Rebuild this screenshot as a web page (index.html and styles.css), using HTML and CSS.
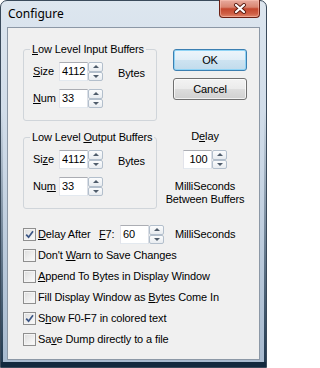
FILE: index.html
```html
<!DOCTYPE html>
<html>
<head>
<meta charset="utf-8">
<title>Configure</title>
<link rel="stylesheet" href="styles.css">
</head>
<body>
<div class="window">
  <div class="titlebar">
    <span class="title">Configure</span>
    <div class="close">
      <svg width="14" height="11" viewBox="0 0 14 11">
        <path d="M3 2 L11 9 M11 2 L3 9" stroke="#5a1c12" stroke-width="4" stroke-linecap="round"/>
        <path d="M3 2 L11 9 M11 2 L3 9" stroke="#ffffff" stroke-width="2.2" stroke-linecap="round"/>
      </svg>
    </div>
  </div>
  <div class="client">
    <div class="top">
      <div class="groups">
        <fieldset class="group">
          <legend><u>L</u>ow Level Input Buffers</legend>
          <div class="row">
            <span class="lbl"><u>S</u>ize</span>
            <span class="field"><span class="input">4112</span><span class="spin"><span class="sb up"></span><span class="sb down"></span></span></span>
            <span class="unit">Bytes</span>
          </div>
          <div class="row">
            <span class="lbl"><u>N</u>um</span>
            <span class="field"><span class="input">33</span><span class="spin"><span class="sb up"></span><span class="sb down"></span></span></span>
          </div>
        </fieldset>
        <fieldset class="group g2">
          <legend>Low Level <u>O</u>utput Buffers</legend>
          <div class="row">
            <span class="lbl">Si<u>z</u>e</span>
            <span class="field"><span class="input">4112</span><span class="spin"><span class="sb up"></span><span class="sb down"></span></span></span>
            <span class="unit">Bytes</span>
          </div>
          <div class="row">
            <span class="lbl">Nu<u>m</u></span>
            <span class="field"><span class="input">33</span><span class="spin"><span class="sb up"></span><span class="sb down"></span></span></span>
          </div>
        </fieldset>
      </div>
      <div class="side">
        <div class="btn default">OK</div>
        <div class="btn cancel">Cancel</div>
        <div class="delay">
          <div class="delay-label">D<u>e</u>lay</div>
          <span class="field"><span class="input">100</span><span class="spin"><span class="sb up"></span><span class="sb down"></span></span></span>
          <div class="ms">MilliSeconds<br>Between Buffers</div>
        </div>
      </div>
    </div>
    <div class="checks">
      <div class="crow">
        <span class="cb checked"><svg width="11" height="11" viewBox="0 0 11 11"><path d="M2.2 5.6 L4.6 8.2 L9 2.2" fill="none" stroke="#3b5585" stroke-width="1.7"/></svg></span>
        <span class="da"><u>D</u>elay After</span>
        <span class="f7"><u>F</u>7:</span>
        <span class="field"><span class="input">60</span><span class="spin"><span class="sb up"></span><span class="sb down"></span></span></span>
        <span class="ms2">MilliSeconds</span>
      </div>
      <div class="crow"><span class="cb"></span><span>Don't <u>W</u>arn to Save Changes</span></div>
      <div class="crow"><span class="cb"></span><span><u>A</u>ppend To Bytes in Display Window</span></div>
      <div class="crow"><span class="cb"></span><span>Fill Display Window as <u>B</u>ytes Come In</span></div>
      <div class="crow">
        <span class="cb checked"><svg width="11" height="11" viewBox="0 0 11 11"><path d="M2.2 5.6 L4.6 8.2 L9 2.2" fill="none" stroke="#3b5585" stroke-width="1.7"/></svg></span>
        <span>S<u>h</u>ow F0-F7 in colored text</span>
      </div>
      <div class="crow"><span class="cb"></span><span>Sa<u>v</u>e Dump directly to a file</span></div>
    </div>
  </div>
</div>
</body>
</html>
```

FILE: styles.css
```css
html, body {
  margin: 0;
  padding: 0;
  background: #ffffff;
}

body {
  font-family: "Liberation Sans", Arial, sans-serif;
  font-size: 11px;
  line-height: 13px;
  letter-spacing: -0.12px;
  color: #000;
}

.window {
  width: 267px;
  height: 368px;
  box-sizing: border-box;
  border: 1px solid #3a4a5b;
  border-radius: 7px 7px 0 0;
  padding: 0 6px 7px;
  display: flex;
  flex-direction: column;
  background:
    linear-gradient(#12293e, #12293e) left bottom / 100% 5px no-repeat,
    linear-gradient(180deg, rgba(18, 42, 64, 0) 30%, rgba(18, 42, 64, 0.9)) left top / 2px 100% no-repeat,
    linear-gradient(180deg, rgba(18, 42, 64, 0) 30%, rgba(18, 42, 64, 0.9)) right top / 2px 100% no-repeat,
    linear-gradient(180deg, #dde6ef 0%, #cbd8e6 45%, #a6b9ce 100%);
}

.titlebar {
  height: 26px;
  display: flex;
  align-items: center;
  padding-left: 1px;
}

.title {
  font-family: "Noto Sans", "Open Sans", sans-serif;
  font-size: 12px;
  line-height: 16px;
  letter-spacing: 0;
  color: #000;
}

.close {
  margin-left: auto;
  align-self: flex-start;
  margin-top: -1px;
  width: 41px;
  height: 18px;
  box-sizing: border-box;
  border: 1px solid #6b2014;
  border-top: none;
  border-radius: 0 0 4px 4px;
  background: linear-gradient(180deg, #e8ab9e 0%, #d98571 42%, #c4472e 52%, #cf5f45 80%, #e0876c 100%);
  box-shadow: inset 0 0 0 1px rgba(255, 200, 185, 0.5);
  display: flex;
  align-items: center;
  justify-content: center;
}

.close svg {
  display: block;
}

.client {
  flex: 1;
  border: 1px solid #8c98a6;
  background: #f0f0f0;
  padding: 15px 0 0 15px;
}

.top {
  display: flex;
}

.groups {
  width: 134px;
  display: flex;
  flex-direction: column;
}

.group {
  margin: 0;
  padding: 6px 0 12px 9px;
  border: 1px solid #d0d5da;
  border-radius: 3px;
  min-width: 0;
  box-sizing: border-box;
  width: 134px;
}

.group legend {
  padding: 0 2px;
  margin-left: -3px;
  line-height: 13px;
  white-space: nowrap;
}

.g2 {
  margin-top: 10px;
}

.row {
  display: flex;
  align-items: center;
  height: 19px;
}

.row + .row {
  margin-top: 8px;
}

.lbl {
  width: 26px;
}

.field {
  display: flex;
  height: 19px;
}

.input {
  width: 29px;
  height: 19px;
  box-sizing: border-box;
  border: 1px solid;
  border-color: #abadb3 #dbdfe6 #e3e9ef #e2e3ea;
  background: #fff;
  padding-left: 2px;
  line-height: 17px;
}

.spin {
  width: 15px;
  height: 19px;
  display: flex;
  flex-direction: column;
}

.sb {
  flex: 1;
  box-sizing: border-box;
  border: 1px solid #b3bfcc;
  border-radius: 2px;
  background: linear-gradient(180deg, #fbfcfd 0%, #e8ecf0 100%);
  display: flex;
  align-items: center;
  justify-content: center;
}

.sb::before {
  content: "";
  width: 0;
  height: 0;
  border-left: 3px solid transparent;
  border-right: 3px solid transparent;
}

.sb.up::before {
  border-bottom: 3px solid #4f5c6b;
}

.sb.down::before {
  border-top: 3px solid #4f5c6b;
}

.unit {
  margin-left: 15px;
  margin-top: 4px;
}

.side {
  width: 76px;
  margin-left: 10px;
  display: flex;
  flex-direction: column;
}

.btn {
  width: 74px;
  height: 22px;
  margin-left: 6px;
  box-sizing: border-box;
  border: 1px solid #707070;
  border-radius: 3px;
  text-align: center;
  line-height: 20px;
  background: linear-gradient(180deg, #f3f3f3 0%, #ebebeb 48%, #dddddd 52%, #d0d0d0 100%);
  box-shadow: inset 0 0 0 1px rgba(255, 255, 255, 0.7);
}

.btn.default {
  margin-top: 6px;
  border-color: #3c7fb1;
  background: linear-gradient(180deg, #edf5fb 0%, #e1eef7 48%, #cde3f1 52%, #c1dbec 100%);
  box-shadow: inset 0 0 0 1px #8fd3f5;
}

.btn.cancel {
  margin-top: 7px;
}

.delay {
  margin-top: 30px;
  display: flex;
  flex-direction: column;
  align-items: center;
  text-align: center;
}

.delay .field {
  margin-top: 7px;
}

.ms {
  margin-top: 11px;
  white-space: nowrap;
}

.checks {
  margin-top: 15px;
}

.crow {
  display: flex;
  align-items: center;
  height: 21px;
  white-space: nowrap;
}

.cb {
  width: 13px;
  height: 13px;
  margin-right: 2px;
  box-sizing: border-box;
  border: 1px solid #8f8f8f;
  background: linear-gradient(135deg, #dcdcdc 0%, #f0f0f0 60%, #fbfbfb 100%);
  box-shadow: inset 0 0 0 1px #f4f4f4;
  display: flex;
  align-items: center;
  justify-content: center;
  flex: none;
}

.cb svg {
  display: block;
}

.da {
  width: 61px;
}

.f7 {
  width: 21px;
}

.ms2 {
  margin-left: 11px;
}
```
